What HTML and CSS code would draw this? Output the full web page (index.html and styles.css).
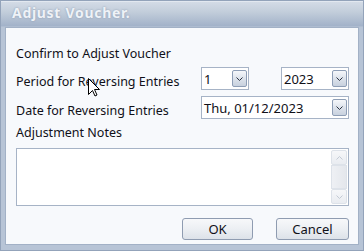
FILE: index.html
```html
<!DOCTYPE html>
<html lang="en">
<head>
<meta charset="UTF-8">
<title>Adjust Voucher.</title>
<link rel="stylesheet" href="styles.css">
</head>
<body>
<div class="window">
  <div class="titlebar">Adjust Voucher.</div>
  <div class="content">
    <div class="row-confirm">Confirm to Adjust Voucher</div>
    <!-- period / year -->
    <div class="row">
      <div class="label">Period for Reversing Entries</div>
      <div class="combo combo-period"><span class="value">1</span><span class="drop"><svg width="7" height="4" viewBox="0 0 7 4"><path d="M0.5 0.5 L3.5 3.5 L6.5 0.5" fill="none" stroke="#2b3340" stroke-width="1"/></svg></span></div>
      <div class="combo combo-year"><span class="value">2023</span><span class="drop"><svg width="7" height="4" viewBox="0 0 7 4"><path d="M0.5 0.5 L3.5 3.5 L6.5 0.5" fill="none" stroke="#2b3340" stroke-width="1"/></svg></span></div>
    </div>
    <div class="row row-date">
      <div class="label">Date for Reversing Entries</div>
      <div class="combo combo-date"><span class="value">Thu, 01/12/2023</span><span class="drop"><svg width="7" height="4" viewBox="0 0 7 4"><path d="M0.5 0.5 L3.5 3.5 L6.5 0.5" fill="none" stroke="#2b3340" stroke-width="1"/></svg></span></div>
    </div>
    <div class="row-notes">Adjustment Notes</div>
    <div class="notes">
      <div class="notes-text"></div>
      <div class="scrollbar">
        <div class="sb-btn"><svg width="7" height="4" viewBox="0 0 7 4"><path d="M0.5 3.5 L3.5 0.5 L6.5 3.5" fill="none" stroke="#c3cad4" stroke-width="1"/></svg></div>
        <div class="sb-track"></div>
        <div class="sb-btn"><svg width="7" height="4" viewBox="0 0 7 4"><path d="M0.5 0.5 L3.5 3.5 L6.5 0.5" fill="none" stroke="#c3cad4" stroke-width="1"/></svg></div>
      </div>
    </div>
    <div class="buttons">
      <button class="btn btn-ok">OK</button>
      <button class="btn btn-cancel">Cancel</button>
    </div>
  </div>
  <!-- mouse pointer in the screenshot -->
  <svg class="cursor" width="12" height="19" viewBox="0 0 12 19"><path d="M0.5 0.5 L0.5 16.5 L4.5 12.5 L7 18 L9 17 L6.5 11.5 L11.5 11.5 Z" fill="#fff" stroke="#000" stroke-width="1" stroke-linejoin="miter"/></svg>
</div>
</body>
</html>
```

FILE: styles.css
```css
/* page */
body, html {
  margin: 0;
  padding: 0;
  background: #ffffff;
  font-family: "Noto Sans", "Open Sans", sans-serif;
  font-size: 12.5px;
  color: #101018;
}
/* window frame */
.window {
  position: relative;
  width: 364px;
  height: 251px;
  box-sizing: border-box;
  display: flex;
  flex-direction: column;
  background: #b7c4d6;
  border: 1px solid #93a3ba;
  padding: 0 4px 5px 4px;
}
.titlebar {
  height: 24px;
  margin: 0 -4px;
  padding-left: 11px;
  line-height: 22px;
  font-size: 14px;
  font-weight: bold;
  letter-spacing: 0.7px;
  color: #eef2f7;
  text-shadow: 0 0 2px #8796ad;
  background: linear-gradient(#d3dbe6, #c3cedb 40%, #a2b2c9);
  border-top: 1px solid #e2e8f0;
  border-bottom: 1px solid #aebcd0;
}
.content {
  flex: 1;
  background: #f7f9fc;
  border: 1px solid #a2b1c6;
  padding: 18px 9px 0 10px;
}
.row-confirm {
  line-height: 16px;
  height: 16px;
}
.row {
  display: flex;
  align-items: flex-end;
  margin-top: 5px;
}
.row-date {
  margin-top: 6px;
}
.label {
  width: 185px;
  line-height: 16px;
}
/* combo boxes */
.combo {
  height: 23px;
  box-sizing: border-box;
  border: 1px solid #a6b3c6;
  background: #ffffff;
  display: flex;
  align-items: center;
  justify-content: space-between;
  padding: 0 1px 0 2px;
  font-size: 13px;
}
.combo-period {
  width: 48px;
}
.combo-year {
  width: 68px;
  margin-left: 32px;
}
.combo-date {
  width: 148px;
}
.drop {
  width: 15px;
  height: 17px;
  box-sizing: border-box;
  border: 1px solid #8e9eb6;
  border-radius: 2px;
  background: linear-gradient(#f5f7fa, #dde3ec 50%, #c8d1de);
  display: flex;
  align-items: center;
  justify-content: center;
}
.row-notes {
  margin-top: 6px;
  line-height: 16px;
}
/* notes box */
.notes {
  margin-top: 7px;
  height: 58px;
  box-sizing: border-box;
  border: 1px solid #a6b3c6;
  background: #ffffff;
  display: flex;
  padding: 1px;
}
.notes-text {
  flex: 1;
}
.scrollbar {
  width: 16px;
  display: flex;
  flex-direction: column;
}
.sb-btn {
  height: 15px;
  box-sizing: border-box;
  border: 1px solid #dde2e9;
  border-radius: 2px;
  background: linear-gradient(#f6f7f9, #e9ecf1);
  display: flex;
  align-items: center;
  justify-content: center;
}
.sb-track {
  flex: 1;
  border: 1px solid #dde2e9;
  background: linear-gradient(90deg, #eef0f4, #e4e7ec);
}
/* buttons */
.buttons {
  display: flex;
  justify-content: flex-end;
  gap: 23px;
  margin-top: 12px;
}
.btn {
  height: 22px;
  border: 1px solid #8f9cb1;
  border-radius: 3px;
  background: linear-gradient(#f7f8fa, #eceff3 50%, #dde2e9);
  font-family: "Noto Sans", "Open Sans", sans-serif;
  font-size: 13px;
  color: #101018;
  padding: 0;
}
.btn-ok {
  width: 71px;
}
.btn-cancel {
  width: 73px;
}
.cursor {
  position: absolute;
  left: 87px;
  top: 77px;
}
```
